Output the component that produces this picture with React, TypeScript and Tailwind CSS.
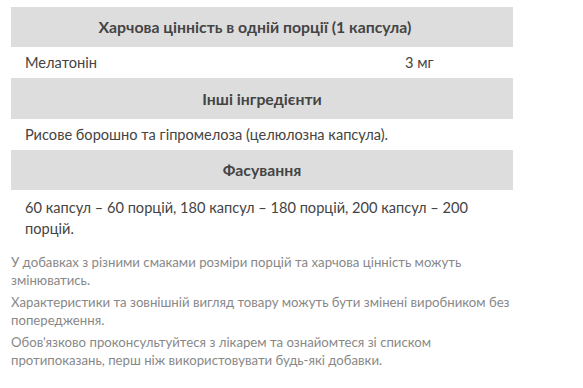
export default function App() {
  const font = { fontFamily: 'Lato, "Noto Sans", sans-serif' };
  return (
    <div className="min-h-[388px] w-[583px] bg-white px-[11px] pt-[7px]" style={font}>
      <div className="w-[502px]">
        {/* Nutrition */}
        <div className="flex h-[40px] items-center justify-center bg-[#dddddd] pr-[14px] text-[15.8px] font-bold text-[#444]">
          Харчова цінність в одній порції (1 капсула)
        </div>
        <div className="flex h-[31px] items-center text-[14.6px] text-[#444]">
          <div className="flex-1 px-[14px]">Мелатонін</div>
          <div className="w-[123px] px-[15px]">3 мг</div>
        </div>

        {/* Other ingredients */}
        <div className="flex h-[41px] items-center justify-center bg-[#dddddd] text-[15.8px] font-bold text-[#444]">
          Інші інгредієнти
        </div>
        <div className="flex h-[31px] items-center px-[14px] text-[14.6px] text-[#444]">
          Рисове борошно та гіпромелоза (целюлозна капсула).
        </div>

        {/* Packaging */}
        <div className="flex h-[40px] items-center justify-center bg-[#dddddd] text-[15.8px] font-bold text-[#444]">
          Фасування
        </div>
        <div className="px-[14px] pt-[7px] pb-[9px] text-[14.6px] leading-[21px] text-[#444]">
          60 капсул – 60 порцій, 180 капсул – 180 порцій, 200 капсул – 200 порцій.
        </div>
      </div>

      <div className="flex w-[502px] flex-col gap-[4px] pt-[5px] text-[13.2px] leading-[18px] text-[#888]">
        <p>У добавках з різними смаками розміри порцій та харчова цінність можуть змінюватись.</p>
        <p>Характеристики та зовнішній вигляд товару можуть бути змінені виробником без попередження.</p>
        <p>Обов'язково проконсультуйтеся з лікарем та ознайомтеся зі списком протипоказань, перш ніж використовувати будь-які добавки.</p>
      </div>
    </div>
  );
}
